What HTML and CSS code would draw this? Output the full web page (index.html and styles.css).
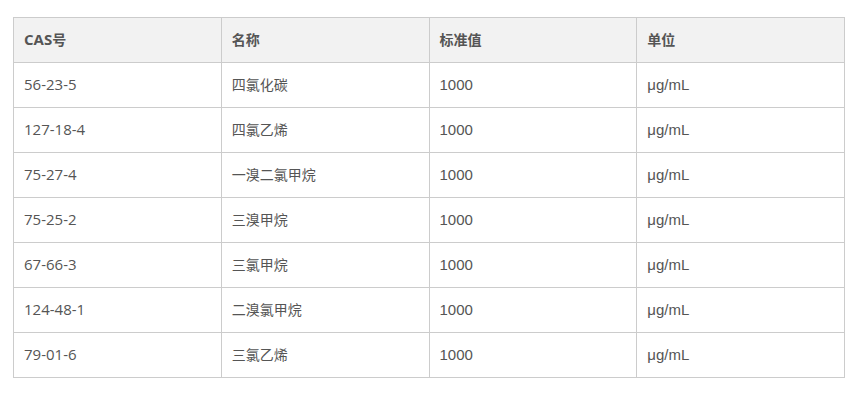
FILE: index.html
```html
<!DOCTYPE html>
<html lang="zh">
<head>
<meta charset="utf-8">
<link rel="stylesheet" href="styles.css">
</head>
<body>
<div class="wrap">
<table class="data">
<thead>
<tr><th>CAS<span class="cn">号</span></th><th class="cn">名称</th><th class="cn">标准值</th><th class="cn">单位</th></tr>
</thead>
<tbody>
<tr><td>56-23-5</td><td class="cn">四氯化碳</td><td class="num">1000</td><td class="num">μg/mL</td></tr>
<tr><td>127-18-4</td><td class="cn">四氯乙烯</td><td class="num">1000</td><td class="num">μg/mL</td></tr>
<tr><td>75-27-4</td><td class="cn">一溴二氯甲烷</td><td class="num">1000</td><td class="num">μg/mL</td></tr>
<tr><td>75-25-2</td><td class="cn">三溴甲烷</td><td class="num">1000</td><td class="num">μg/mL</td></tr>
<tr><td>67-66-3</td><td class="cn">三氯甲烷</td><td class="num">1000</td><td class="num">μg/mL</td></tr>
<tr><td>124-48-1</td><td class="cn">二溴氯甲烷</td><td class="num">1000</td><td class="num">μg/mL</td></tr>
<tr><td>79-01-6</td><td class="cn">三氯乙烯</td><td class="num">1000</td><td class="num">μg/mL</td></tr>
</tbody>
</table>
</div>
</body>
</html>
```
FILE: styles.css
```css
html, body {
  margin: 0;
  padding: 0;
  background: #fff;
}
.wrap {
  padding: 17px 13px;
}
.data {
  width: 832px;
  border-collapse: collapse;
  table-layout: fixed;
  font-family: "Open Sans", "Noto Sans CJK SC", sans-serif;
  font-size: 15px;
  color: #555;
}
.data th,
.data td {
  border: 1px solid #ccc;
  height: 45px;
  padding: 0 10px 2px;
  text-align: left;
  vertical-align: middle;
  box-sizing: border-box;
}
.data th {
  background: #f2f2f2;
  font-weight: bold;
}
.data .cn {
  font-size: 14px;
}
.data td.num {
  font-family: "Liberation Sans", "Noto Sans CJK SC", sans-serif;
}
```
